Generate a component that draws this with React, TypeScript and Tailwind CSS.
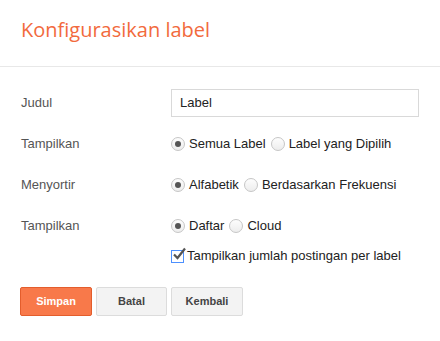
import React from 'react';

interface RadioProps {
  checked?: boolean;
  label: string;
}

function Radio({ checked, label }: RadioProps) {
  return (
    <label className="flex items-center gap-[4px] mr-[5px]">
      <span className="w-[14px] h-[14px] rounded-full border border-[#c6c6c6] bg-gradient-to-b from-[#fdfdfd] to-[#ededed] flex items-center justify-center">
        {checked && <span className="w-[6px] h-[6px] rounded-full bg-[#555]" />}
      </span>
      <span>{label}</span>
    </label>
  );
}

export default function App() {
  return (
    <div className="w-[440px] h-[341px] bg-white font-['Liberation_Sans',Arial,sans-serif] text-[13px] text-[#222]">
      {/* Header */}
      <div className="h-[67px] border-b border-[#e8e8e8] px-[21px] pt-[14px]">
        <h1 className="font-['Open_Sans',sans-serif] text-[20px] leading-[32px] text-[#f26a3d]">
          Konfigurasikan label
        </h1>
      </div>

      {/* Form */}
      <div className="px-[21px] pt-[15px]">
        <div className="grid grid-cols-[150px_1fr] auto-rows-[41px] items-center">
          <div className="text-[#555]">Judul</div>
          <div className="h-[28px] w-[248px] border border-[#d9d9d9] flex items-center px-[8px] text-[#222]">Label</div>

          <div className="text-[#555]">Tampilkan</div>
          <div className="flex items-center">
            <Radio checked label="Semua Label" />
            <Radio label="Label yang Dipilih" />
          </div>

          <div className="text-[#555]">Menyortir</div>
          <div className="flex items-center">
            <Radio checked label="Alfabetik" />
            <Radio label="Berdasarkan Frekuensi" />
          </div>

          <div className="text-[#555]">Tampilkan</div>
          <div className="flex items-center">
            <Radio checked label="Daftar" />
            <Radio label="Cloud" />
          </div>
        </div>

        <div className="grid grid-cols-[150px_1fr] h-[20px] items-center">
          <div />
          <label className="flex items-center gap-[3px]">
            <span className="relative w-[13px] h-[13px] border border-[#4d90fe] bg-white">
              <svg className="absolute left-[0px] top-[-4px]" width="15" height="15" viewBox="0 0 15 15">
                <path d="M2 7.5 L5.5 11 L13 1.5" fill="none" stroke="#555" strokeWidth="2.2" />
              </svg>
            </span>
            <span>Tampilkan jumlah postingan per label</span>
          </label>
        </div>

        {/* Buttons */}
        <div className="flex gap-[4px] mt-[21px] ml-[-1px]">
          <button className="h-[29px] w-[72px] rounded-[2px] border border-[#e35d2c] bg-[#f8794a] text-white font-bold text-[11px]">
            Simpan
          </button>
          <button className="h-[29px] w-[71px] rounded-[2px] border border-[#dcdcdc] bg-[#f3f3f3] text-[#444] font-bold text-[11px]">
            Batal
          </button>
          <button className="h-[29px] w-[72px] rounded-[2px] border border-[#dcdcdc] bg-[#f3f3f3] text-[#444] font-bold text-[11px]">
            Kembali
          </button>
        </div>
      </div>
    </div>
  );
}
